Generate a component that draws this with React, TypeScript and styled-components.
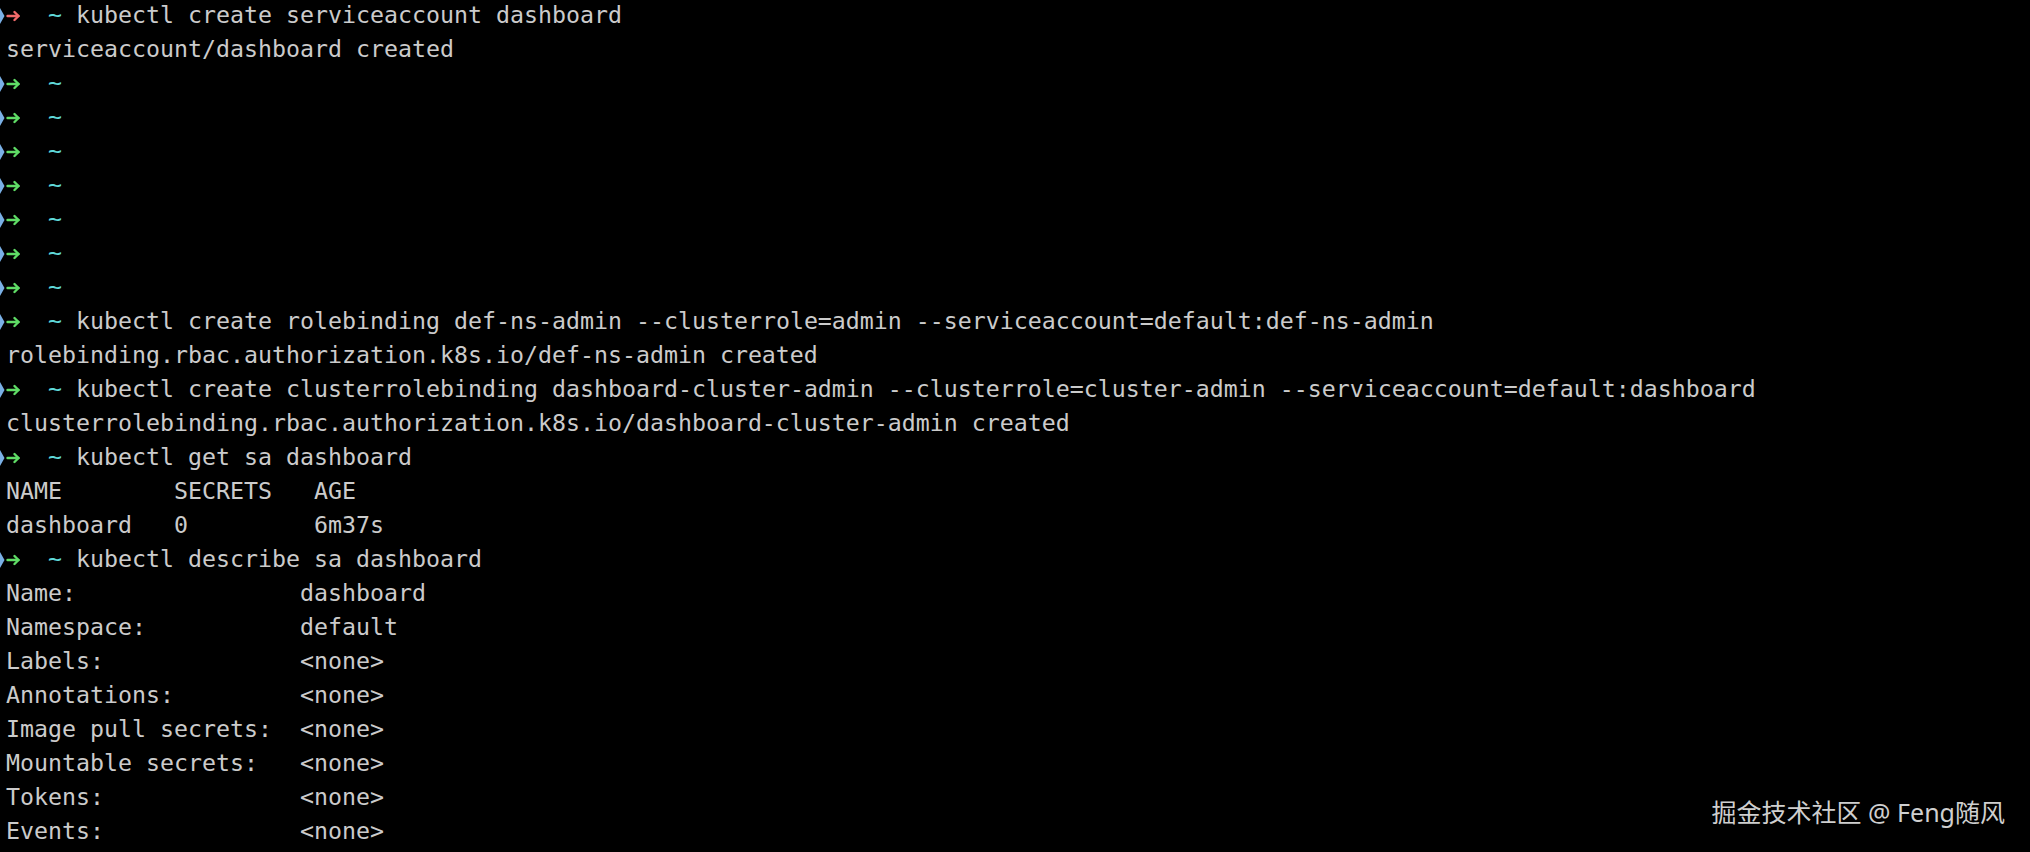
import React from "react";
import styled, { createGlobalStyle } from "styled-components";

const Global = createGlobalStyle`
  html, body {
    margin: 0;
    padding: 0;
    background: #000;
  }
  body {
    width: 2030px;
    height: 852px;
    overflow: hidden;
  }
`;

const Terminal = styled.div`
  position: relative;
  width: 2030px;
  height: 852px;
  box-sizing: border-box;
  padding: 0 0 0 6px;
  background: #000;
  color: #cbcbcb;
  font-family: "DejaVu Sans Mono", "Liberation Mono", monospace;
  font-size: 23.25px;
  line-height: 34px;
  overflow: hidden;
`;

const Lines = styled.div`
  margin-top: -2px;
`;

const Line = styled.div`
  height: 34px;
  white-space: pre;
`;

const PromptIcon = styled.svg`
  display: inline-block;
  vertical-align: top;
  width: 20px;
  height: 34px;
  margin-left: -6px;
`;

const Tilde = styled.span`
  color: #5fd8d8;
`;

const Watermark = styled.div`
  position: absolute;
  right: 25px;
  bottom: 25px;
  color: #cfcfcf;
  font-family: "Noto Sans", "Noto Sans CJK SC", sans-serif;
  font-size: 25px;
  line-height: 30px;
  white-space: pre;
`;

type PromptProps = { cmd?: string; error?: boolean };

const Prompt: React.FC<PromptProps> = ({ cmd, error }) => (
  <Line>
    <PromptIcon viewBox="0 0 20 34">
      <polygon points="0,10 4.5,18 0,26" fill="#7ab0e6" />
      <g
        stroke={error ? "#f06a6a" : "#5fdc66"}
        strokeWidth="2.4"
        fill="none"
        strokeLinecap="round"
        strokeLinejoin="round"
      >
        <line x1="7.5" y1="18" x2="18.5" y2="18" />
        <polyline points="14.5,14 18.5,18 14.5,22" />
      </g>
    </PromptIcon>
    {"  "}
    <Tilde>~</Tilde>
    {cmd ? " " + cmd : ""}
  </Line>
);

const Out: React.FC<{ text: string }> = ({ text }) => <Line>{text}</Line>;

export default function App() {
  return (
    <>
      <Global />
      <Terminal>
        <Lines>
          <Prompt error cmd="kubectl create serviceaccount dashboard" />
          <Out text="serviceaccount/dashboard created" />
          <Prompt />
          <Prompt />
          <Prompt />
          <Prompt />
          <Prompt />
          <Prompt />
          <Prompt />
          <Prompt cmd="kubectl create rolebinding def-ns-admin --clusterrole=admin --serviceaccount=default:def-ns-admin" />
          <Out text="rolebinding.rbac.authorization.k8s.io/def-ns-admin created" />
          <Prompt cmd="kubectl create clusterrolebinding dashboard-cluster-admin --clusterrole=cluster-admin --serviceaccount=default:dashboard" />
          <Out text="clusterrolebinding.rbac.authorization.k8s.io/dashboard-cluster-admin created" />
          <Prompt cmd="kubectl get sa dashboard" />
          <Out text="NAME        SECRETS   AGE" />
          <Out text="dashboard   0         6m37s" />
          <Prompt cmd="kubectl describe sa dashboard" />
          <Out text="Name:                dashboard" />
          <Out text="Namespace:           default" />
          <Out text="Labels:              <none>" />
          <Out text="Annotations:         <none>" />
          <Out text="Image pull secrets:  <none>" />
          <Out text="Mountable secrets:   <none>" />
          <Out text="Tokens:              <none>" />
          <Out text="Events:              <none>" />
        </Lines>
        <Watermark>掘金技术社区 @ Feng随风</Watermark>
      </Terminal>
    </>
  );
}
